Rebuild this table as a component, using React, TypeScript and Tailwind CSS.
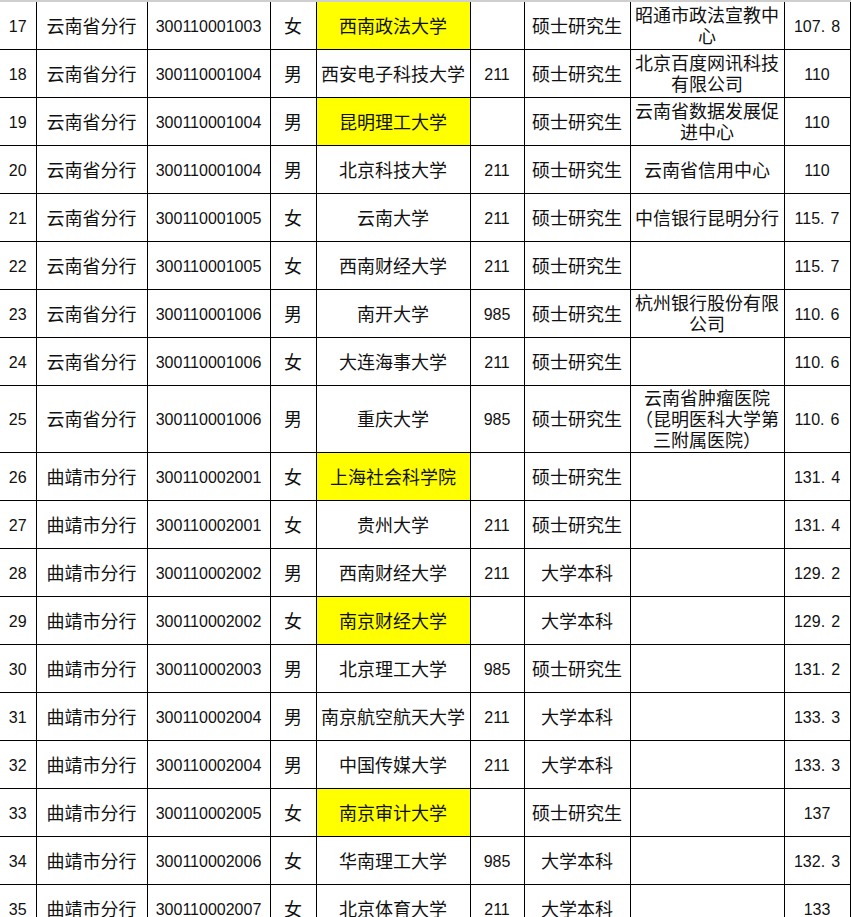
import React from 'react';

type Row = {
  no: number;
  branch: string;
  code: string;
  sex: string;
  school: string;
  hl?: boolean;
  tag: string;
  degree: string;
  org: React.ReactNode;
  score: string;
  tall?: boolean;
};

const rows: Row[] = [
  { no: 17, branch: '云南省分行', code: '300110001003', sex: '女', school: '西南政法大学', hl: true, tag: '', degree: '硕士研究生', org: '昭通市政法宣教中心', score: '107.8' },
  { no: 18, branch: '云南省分行', code: '300110001004', sex: '男', school: '西安电子科技大学', tag: '211', degree: '硕士研究生', org: '北京百度网讯科技有限公司', score: '110' },
  { no: 19, branch: '云南省分行', code: '300110001004', sex: '男', school: '昆明理工大学', hl: true, tag: '', degree: '硕士研究生', org: '云南省数据发展促进中心', score: '110' },
  { no: 20, branch: '云南省分行', code: '300110001004', sex: '男', school: '北京科技大学', tag: '211', degree: '硕士研究生', org: '云南省信用中心', score: '110' },
  { no: 21, branch: '云南省分行', code: '300110001005', sex: '女', school: '云南大学', tag: '211', degree: '硕士研究生', org: '中信银行昆明分行', score: '115.7' },
  { no: 22, branch: '云南省分行', code: '300110001005', sex: '女', school: '西南财经大学', tag: '211', degree: '硕士研究生', org: '', score: '115.7' },
  { no: 23, branch: '云南省分行', code: '300110001006', sex: '男', school: '南开大学', tag: '985', degree: '硕士研究生', org: '杭州银行股份有限公司', score: '110.6' },
  { no: 24, branch: '云南省分行', code: '300110001006', sex: '女', school: '大连海事大学', tag: '211', degree: '硕士研究生', org: '', score: '110.6' },
  {
    no: 25, branch: '云南省分行', code: '300110001006', sex: '男', school: '重庆大学', tag: '985', degree: '硕士研究生',
    org: (<>云南省肿瘤医院<br />（昆明医科大学第三附属医院）</>), score: '110.6', tall: true,
  },
  { no: 26, branch: '曲靖市分行', code: '300110002001', sex: '女', school: '上海社会科学院', hl: true, tag: '', degree: '硕士研究生', org: '', score: '131.4' },
  { no: 27, branch: '曲靖市分行', code: '300110002001', sex: '女', school: '贵州大学', tag: '211', degree: '硕士研究生', org: '', score: '131.4' },
  { no: 28, branch: '曲靖市分行', code: '300110002002', sex: '男', school: '西南财经大学', tag: '211', degree: '大学本科', org: '', score: '129.2' },
  { no: 29, branch: '曲靖市分行', code: '300110002002', sex: '女', school: '南京财经大学', hl: true, tag: '', degree: '大学本科', org: '', score: '129.2' },
  { no: 30, branch: '曲靖市分行', code: '300110002003', sex: '男', school: '北京理工大学', tag: '985', degree: '硕士研究生', org: '', score: '131.2' },
  { no: 31, branch: '曲靖市分行', code: '300110002004', sex: '男', school: '南京航空航天大学', tag: '211', degree: '大学本科', org: '', score: '133.3' },
  { no: 32, branch: '曲靖市分行', code: '300110002004', sex: '男', school: '中国传媒大学', tag: '211', degree: '大学本科', org: '', score: '133.3' },
  { no: 33, branch: '曲靖市分行', code: '300110002005', sex: '女', school: '南京审计大学', hl: true, tag: '', degree: '硕士研究生', org: '', score: '137' },
  { no: 34, branch: '曲靖市分行', code: '300110002006', sex: '女', school: '华南理工大学', tag: '985', degree: '大学本科', org: '', score: '132.3' },
  { no: 35, branch: '曲靖市分行', code: '300110002007', sex: '女', school: '北京体育大学', tag: '211', degree: '大学本科', org: '', score: '133' },
];

const num = "font-['Liberation_Sans',Arial,sans-serif] text-[16px]";
const cell = 'border border-black text-center align-middle px-1 p-0';

function Score({ value }: { value: string }) {
  const [a, b] = value.split('.');
  if (!b) return <span className={num}>{a}</span>;
  return (
    <span className={num}>
      {a}
      <span className="mr-[6px]">.</span>
      {b}
    </span>
  );
}

export default function App() {
  return (
    <div className="w-[851px] h-[917px] overflow-hidden bg-white">
      <table className="table-fixed border-collapse w-[850px] border-t-2 border-t-[#cfcfcf] font-['Noto_Sans_CJK_SC','Noto_Sans',sans-serif] text-[18px] leading-[21px] text-[#111]">
        <colgroup>
          <col className="w-[36px]" />
          <col className="w-[111px]" />
          <col className="w-[123px]" />
          <col className="w-[46px]" />
          <col className="w-[154px]" />
          <col className="w-[54px]" />
          <col className="w-[106px]" />
          <col className="w-[154px]" />
          <col className="w-[66px]" />
        </colgroup>
        <tbody>
          {rows.map(r => (
            <tr key={r.no} className={r.tall ? 'h-[67px]' : 'h-[48px]'}>
              <td className={`${cell} border-l-0 ${r.no === 17 ? 'border-t-[#cfcfcf]' : ''}`}>
                <span className={num}>{r.no}</span>
              </td>
              <td className={cell}>{r.branch}</td>
              <td className={cell}>
                <span className={num}>{r.code}</span>
              </td>
              <td className={cell}>{r.sex}</td>
              <td className={`${cell} ${r.hl ? 'bg-[#ffff00]' : ''}`}>{r.school}</td>
              <td className={cell}>
                <span className={num}>{r.tag}</span>
              </td>
              <td className={cell}>{r.degree}</td>
              <td className={cell}>{r.org}</td>
              <td className={cell}>
                <Score value={r.score} />
              </td>
            </tr>
          ))}
        </tbody>
      </table>
    </div>
  );
}
